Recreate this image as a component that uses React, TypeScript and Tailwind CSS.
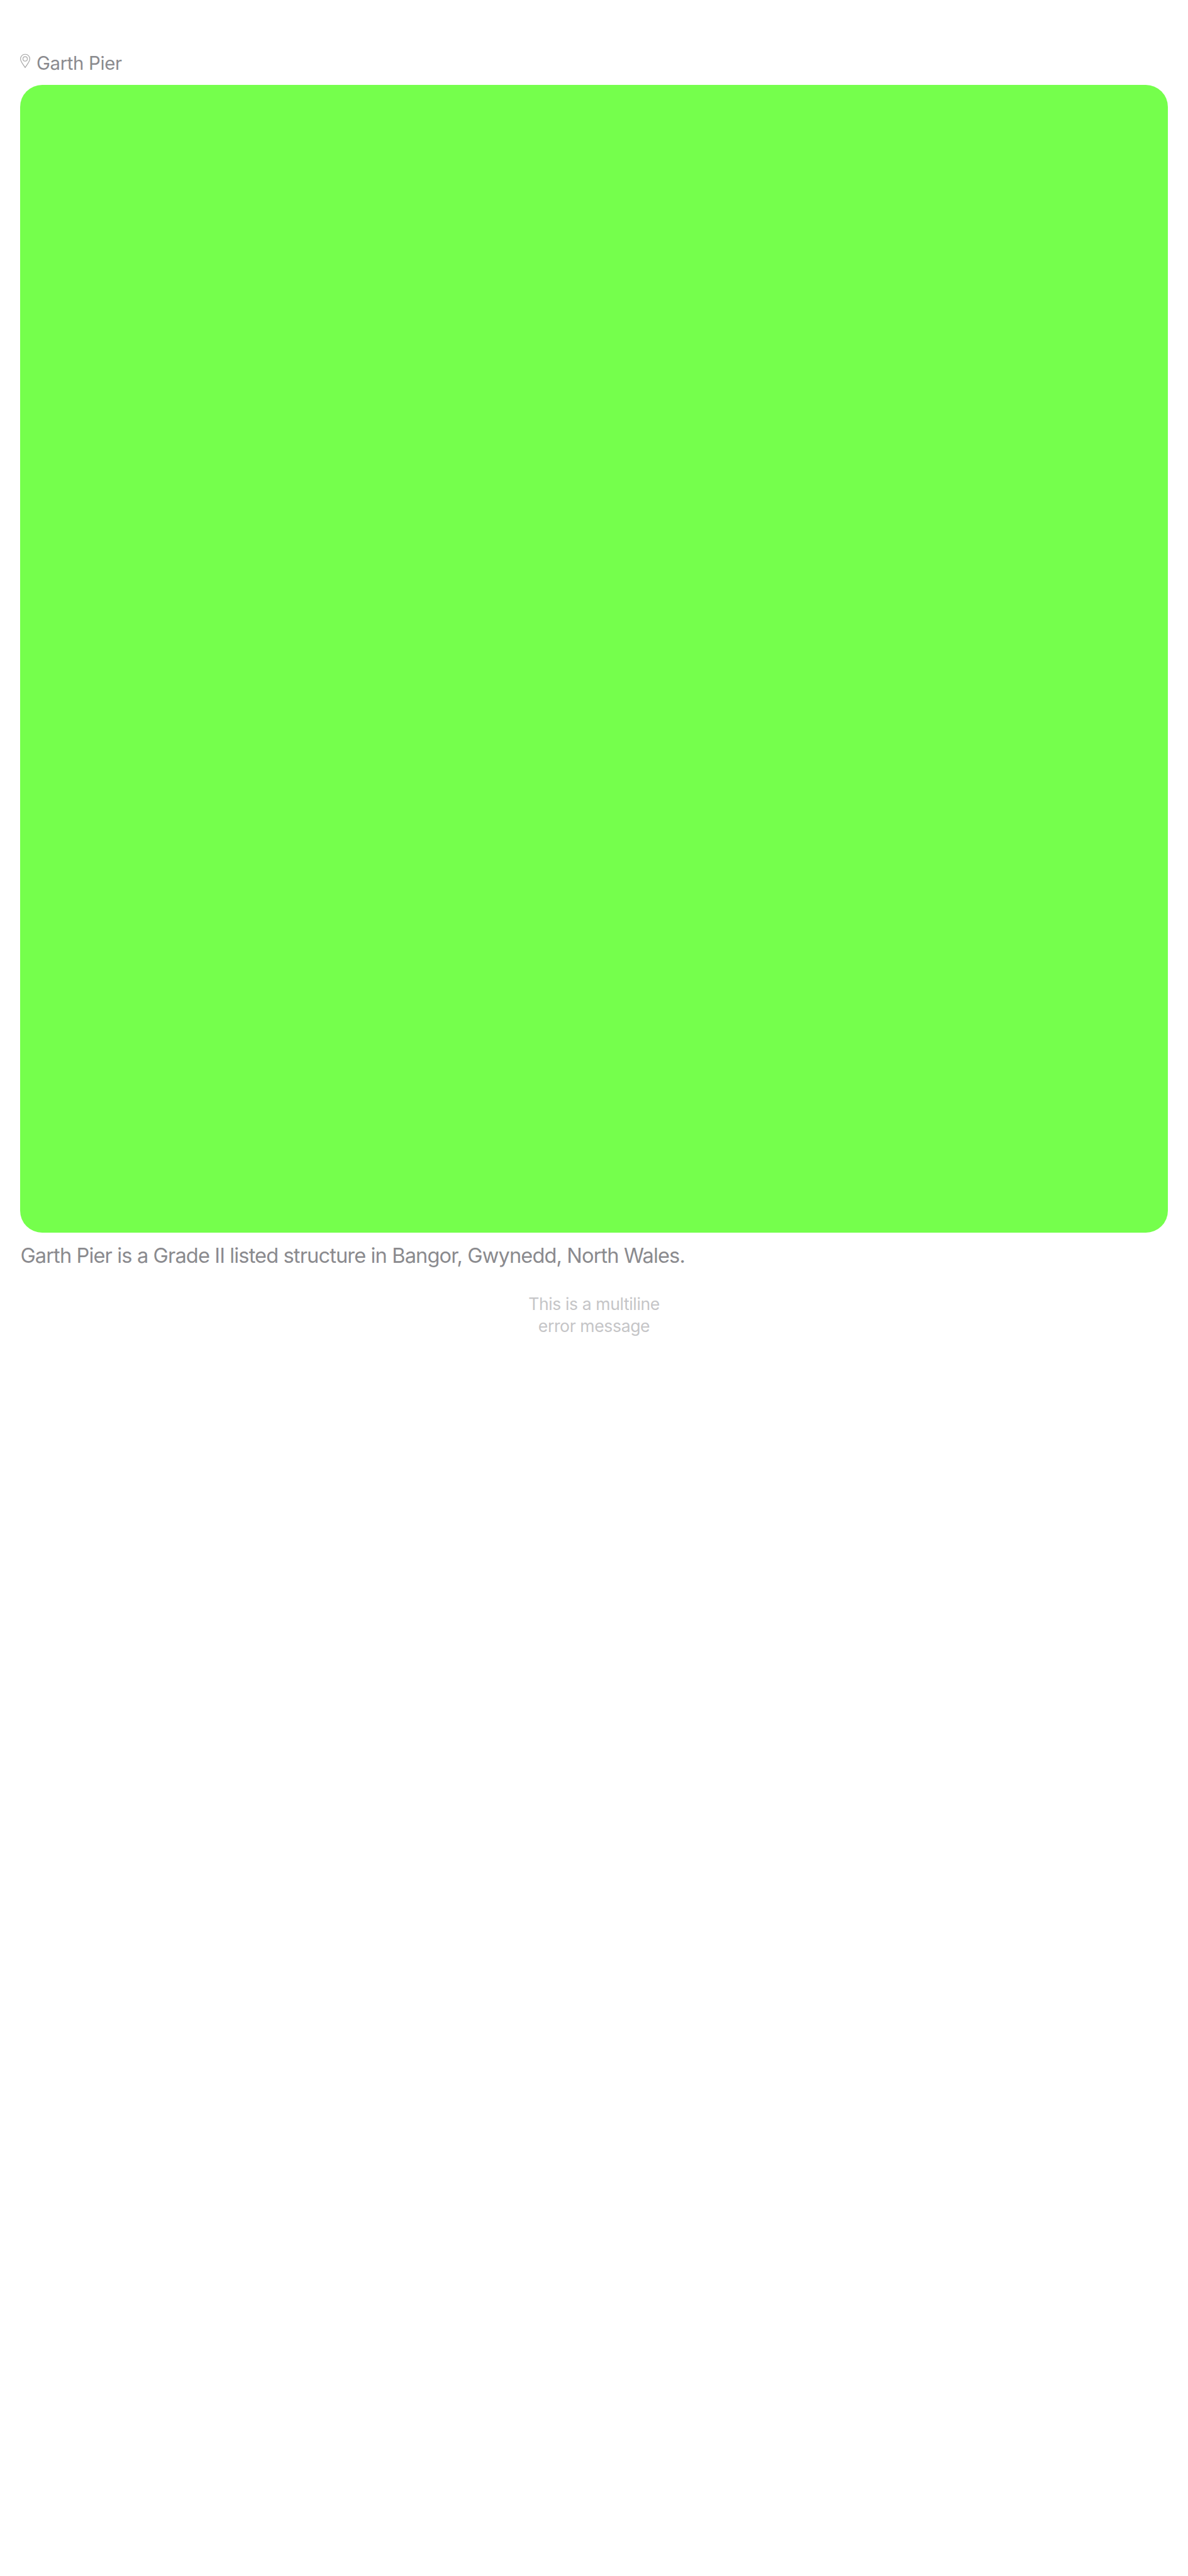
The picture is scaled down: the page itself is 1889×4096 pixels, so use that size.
function PinIcon() {
  return (
    <svg className="h-[24px] w-[16px] shrink-0" viewBox="60 160.5 30 45" fill="none" stroke="#a6a6a6" strokeWidth="2.2">
      <path d="M75 202.600L67.300 191.300C64 186.300 61.200 181.500 61.200 176.600A13.800 13.800 0 0 1 88.800 176.600C88.800 181.500 86 186.300 82.700 191.300Z" />
      <circle cx="75" cy="176.700" r="6.500" />
    </svg>
  );
}

export default function App() {
  return (
    <main className="flex h-[4096px] w-[1889px] flex-col bg-white px-8 pt-[80px] font-['Inter',sans-serif] text-[#8a8a8e]">
      <header className="flex h-[54.600px] items-start">
        <div className="mt-[5.300px] flex">
          <PinIcon />
        </div>
        <h1 className="mt-[0.600px] ml-[10px] text-[29.400px] leading-[40px] tracking-[-0.370px] whitespace-nowrap">
          Garth Pier
        </h1>
      </header>
      <div className="h-[1825px] w-[1825px] shrink-0 rounded-[35px] bg-[#75ff4c]" />
      <p className="mt-[16px] ml-[0.400px] text-[32.600px] leading-[40px] tracking-[-0.880px] whitespace-nowrap">
        Garth Pier is a Grade II listed structure in Bangor, Gwynedd, North Wales.
      </p>
      <p className="mt-[40px] text-center text-[26.600px] leading-[35.200px] tracking-[-0.400px] text-[#c5c5c7]">
        This is a multiline
        <br />
        error message
      </p>
    </main>
  );
}
